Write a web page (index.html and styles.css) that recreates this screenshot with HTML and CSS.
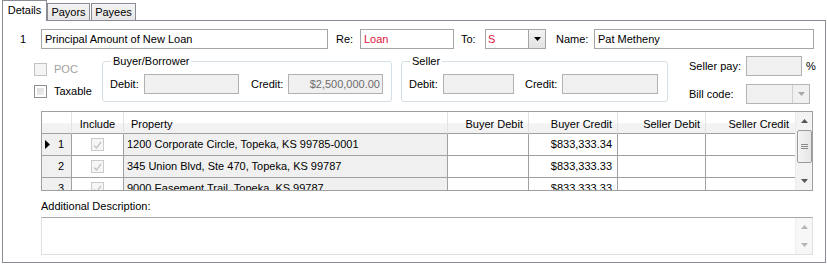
FILE: index.html
```html
<!DOCTYPE html>
<html lang="en">
<head>
  <meta charset="UTF-8">
  <title>Disbursement Line</title>
  <link rel="stylesheet" href="styles.css">
</head>
<body>

  <!-- Tab strip -->
  <div class="tabs">
    <div class="tab active tab-details">Details</div>
    <div class="tab tab-payors">Payors</div>
    <div class="tab tab-payees">Payees</div>
  </div>

  <div class="panel">

    <!-- Line 1: description / re / to / name -->
    <div class="row-main">
      <span class="line-num">1</span>
      <div class="field w-desc">Principal Amount of New Loan</div>
      <span class="lbl lbl-re">Re:</span>
      <div class="field w-re red">Loan</div>
      <span class="lbl lbl-to">To:</span>
      <div class="combo w-to">
        <span class="combo-text red">S</span>
        <span class="combo-btn">
          <svg width="7" height="4" viewBox="0 0 7 4"><polygon points="0,0 7,0 3.5,4" fill="#000"/></svg>
        </span>
      </div>
      <span class="lbl lbl-name">Name:</span>
      <div class="field w-name">Pat Metheny</div>
    </div>

    <!-- Options and amounts -->
    <div class="row-opts">
      <div class="checks">
        <div class="check disabled"><span class="box"></span>POC</div>
        <div class="check"><span class="box"></span>Taxable</div>
      </div>

      <fieldset class="group group-buyer">
        <legend>Buyer/Borrower</legend>
        <div class="group-row">
          <span class="glbl glbl-debit">Debit:</span>
          <div class="field dis w-bdebit"></div>
          <span class="glbl glbl-credit">Credit:</span>
          <div class="field dis money w-bcredit">$2,500,000.00</div>
        </div>
      </fieldset>

      <fieldset class="group group-seller">
        <legend>Seller</legend>
        <div class="group-row">
          <span class="glbl glbl-debit">Debit:</span>
          <div class="field dis w-sdebit"></div>
          <span class="glbl glbl-credit s-credit">Credit:</span>
          <div class="field dis w-scredit"></div>
        </div>
      </fieldset>

      <div class="side">
        <div class="side-row">
          <span class="side-lbl">Seller pay:</span>
          <div class="field dis w-pay"></div>
          <span class="pct">%</span>
        </div>
        <div class="side-row bill">
          <span class="side-lbl">Bill code:</span>
          <div class="combo dis w-bill">
            <span class="combo-text"></span>
            <span class="combo-btn">
              <svg width="7" height="4" viewBox="0 0 7 4"><polygon points="0,0 7,0 3.5,4" fill="#a8a8a8"/></svg>
            </span>
          </div>
        </div>
      </div>
    </div>

    <!-- Property grid -->
    <div class="grid">
      <div class="grid-body">
        <div class="hcell"></div>
        <div class="hcell center">Include</div>
        <div class="hcell left">Property</div>
        <div class="hcell">Buyer Debit</div>
        <div class="hcell">Buyer Credit</div>
        <div class="hcell">Seller Debit</div>
        <div class="hcell last">Seller Credit</div>

        <div class="rhead"><span class="current">
          <svg width="5" height="9" viewBox="0 0 5 9"><polygon points="0,0 5,4.5 0,9" fill="#000"/></svg>
        </span>1</div>
        <div class="cell center"><span class="gcheck"><svg width="9" height="8" viewBox="0 0 9 8"><path d="M1 4.5 L3.5 7 L8 1" stroke="#c4c4c4" stroke-width="1.4" fill="none"/></svg></span></div>
        <div class="cell left ro">1200 Corporate Circle, Topeka, KS 99785-0001</div>
        <div class="cell"></div>
        <div class="cell">$833,333.34</div>
        <div class="cell"></div>
        <div class="cell"></div>

        <div class="rhead">2</div>
        <div class="cell center"><span class="gcheck"><svg width="9" height="8" viewBox="0 0 9 8"><path d="M1 4.5 L3.5 7 L8 1" stroke="#c4c4c4" stroke-width="1.4" fill="none"/></svg></span></div>
        <div class="cell left ro">345 Union Blvd, Ste 470, Topeka, KS 99787</div>
        <div class="cell"></div>
        <div class="cell">$833,333.33</div>
        <div class="cell"></div>
        <div class="cell"></div>

        <div class="rhead">3</div>
        <div class="cell center"><span class="gcheck"><svg width="9" height="8" viewBox="0 0 9 8"><path d="M1 4.5 L3.5 7 L8 1" stroke="#c4c4c4" stroke-width="1.4" fill="none"/></svg></span></div>
        <div class="cell left ro">9000 Easement Trail, Topeka, KS 99787</div>
        <div class="cell"></div>
        <div class="cell">$833,333.33</div>
        <div class="cell"></div>
        <div class="cell"></div>
      </div>

      <div class="vscroll">
        <span class="arrow">
          <svg width="7" height="4" viewBox="0 0 7 4"><polygon points="0,4 7,4 3.5,0" fill="#555"/></svg>
        </span>
        <div class="thumb">
          <span class="grip"></span><span class="grip"></span><span class="grip"></span>
        </div>
        <span class="arrow down">
          <svg width="7" height="4" viewBox="0 0 7 4"><polygon points="0,0 7,0 3.5,4" fill="#555"/></svg>
        </span>
      </div>
    </div>

    <!-- Additional description -->
    <div class="desc-lbl">Additional Description:</div>
    <div class="memo">
      <div class="memo-text"></div>
      <div class="memo-scroll">
        <svg width="7" height="4" viewBox="0 0 7 4"><polygon points="0,4 7,4 3.5,0" fill="#b4b4b4"/></svg>
        <svg width="7" height="4" viewBox="0 0 7 4"><polygon points="0,0 7,0 3.5,4" fill="#b4b4b4"/></svg>
      </div>
    </div>

  </div>

</body>
</html>
```

FILE: styles.css
```css
* {
  box-sizing: border-box;
}

body {
  margin: 0;
  background: #fff;
  color: #000;
  font-family: "Liberation Sans", Arial, sans-serif;
  font-size: 11px;
  line-height: 13px;
}

/* Tabs */
.tabs {
  display: flex;
  align-items: flex-end;
  height: 20px;
  padding-left: 2px;
}

.tab {
  height: 17px;
  border: 1px solid #898c95;
  border-bottom: none;
  background: linear-gradient(#f4f4f4, #e6e6e6);
  text-align: center;
  line-height: 16px;
  white-space: nowrap;
}

.tab.active {
  height: 21px;
  margin-bottom: -1px;
  background: #fff;
  position: relative;
  z-index: 1;
  line-height: 18px;
}

.tab-details { width: 45px; }
.tab-payors  { width: 43px; margin-left: 0; }
.tab-payees  { width: 45px; margin-left: 1px; }

.panel {
  margin: 0 1px 0 2px;
  height: 243px;
  border: 1px solid #898c95;
  padding-top: 8px;
}

/* Generic inputs */
.field {
  height: 20px;
  border: 1px solid #a5a5a5;
  background: #fff;
  padding: 0 3px;
  line-height: 18px;
  white-space: nowrap;
  overflow: hidden;
}

.field.dis {
  background: #f0f0f0;
  border-color: #b1b1b1;
}

.field.money {
  text-align: right;
  color: #6d6d6d;
  padding-right: 2px;
}

.red { color: #dc143c; }

.combo {
  display: flex;
  height: 20px;
  border: 1px solid #a5a5a5;
  background: #fff;
}

.combo-text {
  flex: 1;
  padding-left: 2px;
  line-height: 18px;
}

.combo-btn {
  width: 17px;
  border-left: 1px solid #a5a5a5;
  background: linear-gradient(#f3f3f3, #e2e2e2);
  display: flex;
  align-items: center;
  justify-content: center;
}

.combo.dis {
  background: #f0f0f0;
  border-color: #b5b5b5;
}

.combo.dis .combo-btn {
  background: #f0f0f0;
  border-left-color: #cfcfcf;
}

/* Line 1 */
.row-main {
  display: flex;
  align-items: center;
  height: 20px;
}

.line-num {
  width: 38px;
  padding-left: 17px;
}

.lbl { white-space: nowrap; }
.lbl-re   { margin-left: 8px; width: 24px; }
.lbl-to   { margin-left: 7px; width: 24px; }
.lbl-name { margin-left: 10px; width: 38px; }

.w-desc { width: 287px; }
.w-re   { width: 94px; }
.w-to   { width: 61px; }
.w-name { width: 220px; }

/* Options row */
.row-opts {
  display: flex;
  align-items: flex-start;
  height: 48px;
  margin-top: 7px;
  padding-left: 31px;
}

.checks {
  width: 68px;
  padding-top: 2px;
}

.check {
  display: flex;
  align-items: center;
  height: 22px;
}

.check .box {
  width: 13px;
  height: 13px;
  margin-right: 7px;
  border: 1px solid #8e8f8f;
  background: linear-gradient(135deg, #d6d6d6, #f6f6f6);
  box-shadow: inset 0 0 0 2px #fff;
}

.check.disabled {
  color: #a0a0a0;
}

.check.disabled .box {
  border-color: #c2c2c2;
  background: #f4f4f4;
  box-shadow: none;
}

.group {
  margin: -1px 0 0;
  padding: 0 0 0 7px;
  height: 47px;
  border: 1px solid #d5dfe5;
  border-radius: 3px;
  min-width: 0;
}

.group legend {
  margin-left: 1px;
  padding: 0 2px;
  line-height: 12px;
}

.group-row {
  display: flex;
  align-items: center;
  margin-top: 7px;
}

.group-buyer  { width: 290px; }
.group-seller { width: 267px; margin-left: 9px; }

.glbl-debit  { width: 34px; }
.glbl-credit { width: 37px; margin-left: 12px; }
.s-credit    { margin-left: 11px; }

.w-bdebit  { width: 95px; }
.w-bcredit { width: 95px; }
.w-sdebit  { width: 71px; }
.w-scredit { width: 96px; }

.side {
  margin-left: 21px;
}

.side-row {
  display: flex;
  align-items: center;
  height: 20px;
}

.side-row.bill {
  margin-top: 8px;
}

.side-lbl { width: 57px; }
.w-pay    { width: 56px; }
.w-bill   { width: 64px; }
.pct      { margin-left: 4px; }

/* Grid */
.grid {
  display: flex;
  width: 772px;
  height: 80px;
  margin: 7px 0 0 38px;
  border: 1px solid #a0a0a0;
  overflow: hidden;
}

.grid-body {
  display: grid;
  grid-template-columns: 30px 52px 324px 81px 89px 88px 89px;
  grid-auto-rows: 22px;
  width: 753px;
  flex: none;
}

.hcell {
  border-right: 1px solid #e3e3e3;
  border-bottom: 1px solid #a0a0a0;
  background: linear-gradient(#fff 0, #fff 50%, #f4f4f4 50%, #f1f1f1);
  text-align: right;
  padding: 6px 5px 0 0;
  white-space: nowrap;
}

.hcell.center { text-align: center; padding-right: 0; }
.hcell.left   { text-align: left; padding-left: 7px; }
.hcell.last   { border-right: none; padding-right: 6px; }

.rhead {
  display: flex;
  align-items: center;
  justify-content: flex-end;
  padding-right: 7px;
  background: #f0f0f0;
  border-right: 1px solid #a0a0a0;
  border-bottom: 1px solid #a0a0a0;
}

.rhead .current {
  display: flex;
  margin-right: 8px;
}

.cell {
  border-right: 1px solid #a0a0a0;
  border-bottom: 1px solid #a0a0a0;
  text-align: right;
  padding: 4px 5px 0 0;
  white-space: nowrap;
  overflow: hidden;
}

.cell:nth-child(7n) { border-right: none; }

.cell.left   { text-align: left; padding-left: 3px; }
.cell.center { display: flex; align-items: center; justify-content: center; padding: 0; }
.cell.ro     { background: #f0f0f0; }

.gcheck {
  display: flex;
  align-items: center;
  justify-content: center;
  width: 13px;
  height: 13px;
  border: 1px solid #cacaca;
  background: #f6f6f6;
}

.vscroll {
  width: 17px;
  display: flex;
  flex-direction: column;
  align-items: center;
  background: #f3f3f3;
  border-left: 1px solid #ececec;
}

.vscroll .arrow {
  height: 18px;
  display: flex;
  align-items: center;
}

.vscroll .arrow.down {
  margin-top: auto;
}

.thumb {
  width: 15px;
  height: 33px;
  border: 1px solid #9b9b9b;
  border-radius: 2px;
  background: linear-gradient(90deg, #f4f4f4, #e6e6e6);
  display: flex;
  flex-direction: column;
  align-items: center;
  justify-content: center;
  gap: 1px;
}

.grip {
  width: 7px;
  height: 1px;
  background: #8a8a8a;
}

/* Additional description */
.desc-lbl {
  margin: 9px 0 4px 38px;
}

.memo {
  display: flex;
  width: 772px;
  height: 38px;
  margin-left: 38px;
  border: 1px solid #dcdfe3;
  border-top-color: #a7a7a7;
}

.memo-text {
  flex: 1;
}

.memo-scroll {
  width: 17px;
  display: flex;
  flex-direction: column;
  align-items: center;
  justify-content: space-around;
  background: #f7f7f7;
  border-left: 1px solid #efefef;
}
```
